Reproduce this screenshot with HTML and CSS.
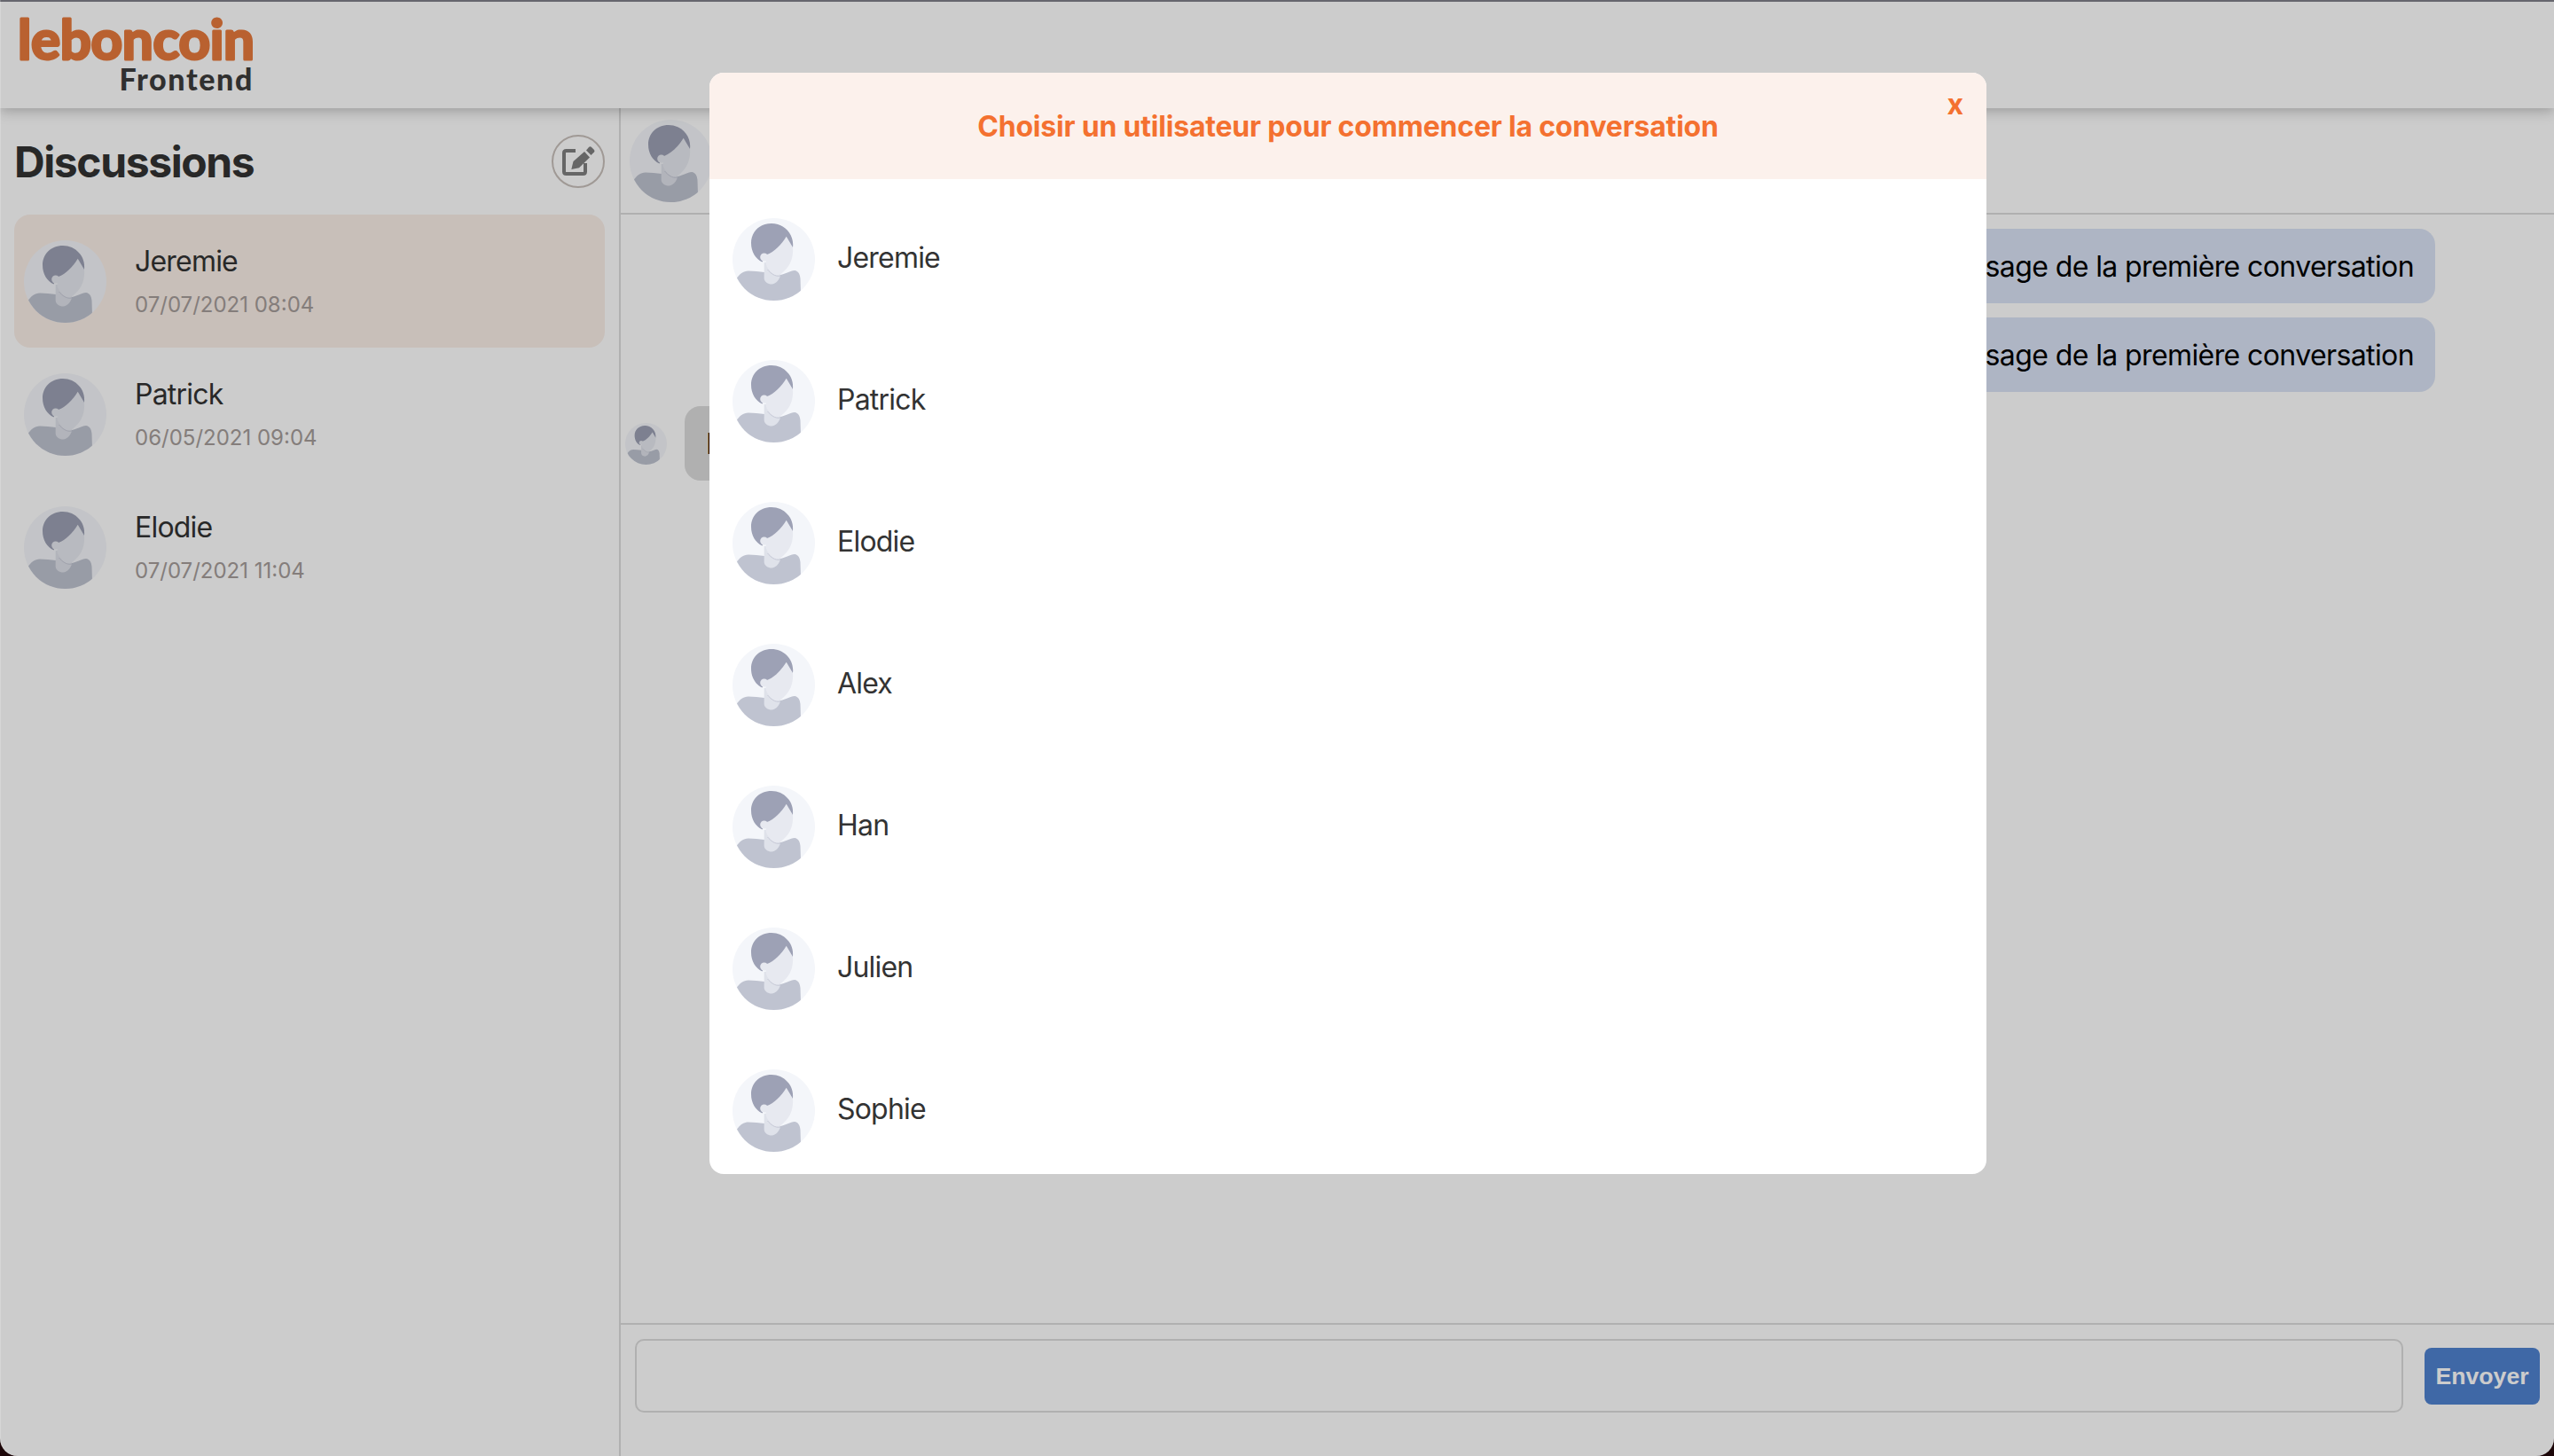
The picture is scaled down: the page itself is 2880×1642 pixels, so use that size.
FILE: index.html
```html
<!DOCTYPE html>
<html lang="fr">
<head>
<meta charset="utf-8">
<title>leboncoin Frontend</title>
<link rel="stylesheet" href="styles.css">
</head>
<body>
<svg class="defs" width="0" height="0" aria-hidden="true">
  <defs>
    <clipPath id="disc"><circle cx="46.5" cy="46.5" r="46.5"/></clipPath>
    <symbol id="avatar" viewBox="0 0 93 93">
      <circle cx="46.5" cy="46.5" r="46.5" fill="#f4f6fa"/>
      <g clip-path="url(#disc)">
        <path d="M4 69C8 63 12 59.5 18 59.5C24 59.5 30 60 36 61L54 64C60 63 65 59.5 70 59C74 59.5 76 63 76.5 68L77 84V100H4Z" fill="#bfc3d0"/>
        <path d="M35.7 50V68C36 72 40 74.5 44 74.5C49 74 53 70 54 64V50Z" fill="#dfe2ea"/>
        <path d="M38 42L60.7 20.7L68 33C69 44 65 54 58 60C54 64 50 65.5 47 64C43 61 38 56 37.5 50Z" fill="#e7e9f0"/>
        <path d="M39.5 58C43 62 48 66.5 54 65" fill="none" stroke="#c6c9d6" stroke-width="1"/>
        <path d="M60.7 20.7L68 33C70 18 58 6 44 6C30 6 21 16 21 28C21 38 26 46 33.5 49.5L36 44L39 41C47 38 55 30 60.7 20.7Z" fill="#9da1b5"/>
        <circle cx="35.7" cy="44" r="4.5" fill="#e7e9f0"/>
      </g>
    </symbol>
  </defs>
</svg>

<div class="app">
  <header class="topbar">
    <div class="logo">
      <svg class="logo-mark" viewBox="0 0 276 52" width="276" height="52">
        <text class="logo-main" x="2" y="47" textLength="267" lengthAdjust="spacing">leboncoin</text>
      </svg>
      <span class="logo-sub">Frontend</span>
    </div>
  </header>
  <main class="main">
    <aside class="sidebar">
      <div class="side-head">
        <h1 class="side-title">Discussions</h1>
        <button class="new-btn" type="button" aria-label="Nouvelle conversation">
          <svg class="new-icon" viewBox="0 0 40 40">
            <path d="M17 8H6.5Q4 8 4 10.5V31.5Q4 34 6.5 34H25.5Q28 34 28 31.5V22" fill="none" stroke="#808080" stroke-width="4"/>
            <path d="M12.3 29L14.5 20L27 9L33 15.5L21 27.3Z" fill="#808080"/>
            <path d="M29 7.5L32 4Q33.5 2.5 35 4L38 7Q39 8.5 38 9.5L34.5 13Z" fill="#808080"/>
          </svg>
        </button>
      </div>
      <ul class="conv-list">
        <li class="conv conv-active">
          <svg class="avatar"><use href="#avatar"/></svg>
          <div class="conv-text"><div class="conv-name">Jeremie</div><div class="conv-date">07/07/2021 08:04</div></div>
        </li>
        <li class="conv">
          <svg class="avatar"><use href="#avatar"/></svg>
          <div class="conv-text"><div class="conv-name">Patrick</div><div class="conv-date">06/05/2021 09:04</div></div>
        </li>
        <li class="conv">
          <svg class="avatar"><use href="#avatar"/></svg>
          <div class="conv-text"><div class="conv-name">Elodie</div><div class="conv-date">07/07/2021 11:04</div></div>
        </li>
      </ul>
    </aside>
    <section class="chat">
      <div class="chat-head"><svg class="avatar"><use href="#avatar"/></svg></div>
      <div class="messages">
        <div class="msg msg-out">Premier message de la première conversation</div>
        <div class="msg msg-out">Deuxième message de la première conversation</div>
        <div class="msg-in-row">
          <svg class="avatar-small"><use href="#avatar"/></svg>
          <div class="msg msg-in">Bonjour, ceci est une réponse</div>
        </div>
      </div>
      <form class="composer">
        <textarea class="composer-input" aria-label="Message"></textarea>
        <button class="send" type="button">Envoyer</button>
      </form>
    </section>
  </main>
</div>

<div class="overlay">
  <div class="modal">
    <div class="modal-head">
      <h2 class="modal-title">Choisir un utilisateur pour commencer la conversation</h2>
      <span class="modal-close">x</span>
    </div>
    <ul class="user-list">
      <li class="user"><svg class="avatar"><use href="#avatar"/></svg><span class="user-name">Jeremie</span></li>
      <li class="user"><svg class="avatar"><use href="#avatar"/></svg><span class="user-name">Patrick</span></li>
      <li class="user"><svg class="avatar"><use href="#avatar"/></svg><span class="user-name">Elodie</span></li>
      <li class="user"><svg class="avatar"><use href="#avatar"/></svg><span class="user-name">Alex</span></li>
      <li class="user"><svg class="avatar"><use href="#avatar"/></svg><span class="user-name">Han</span></li>
      <li class="user"><svg class="avatar"><use href="#avatar"/></svg><span class="user-name">Julien</span></li>
      <li class="user"><svg class="avatar"><use href="#avatar"/></svg><span class="user-name">Sophie</span></li>
    </ul>
  </div>
</div>
</body>
</html>
```

FILE: styles.css
```css
* { box-sizing: border-box; }
html, body { height: 100%; margin: 0; overflow: hidden; background: #1c0608; }
body { font-family: Inter, "Liberation Sans", sans-serif; color: #333; }
ul { list-style: none; margin: 0; padding: 0; }
.defs { display: block; height: 0; }

.app {
  height: 1642px;
  display: flex;
  flex-direction: column;
  background: #fff;
  border-top: 2px solid #808089;
  border-radius: 0 0 20px 20px;
  overflow: hidden;
}

.topbar {
  height: 120px;
  flex: none;
  padding: 18px 0 0 18px;
  background: #fff;
  box-shadow: 0 3px 14px rgba(0,0,0,.25);
  position: relative;
  z-index: 1;
}
.logo { width: 268px; display: flex; flex-direction: column; align-items: flex-end; }
.logo-mark { display: block; flex: none; align-self: flex-start; overflow: visible; }
.logo-main {
  font-family: Lato, sans-serif;
  font-weight: 700;
  font-size: 62px;
  fill: #e87a3c;
  stroke: #e87a3c;
  stroke-width: 3px;
  stroke-linejoin: round;
  stroke-linecap: round;
}
.logo-sub {
  font-family: Lato, sans-serif;
  font-weight: 900;
  font-size: 34px;
  line-height: 30px;
  letter-spacing: 1.6px;
  color: #3d3d3d;
  margin-top: 2px;
}

.main { flex: 1; display: flex; min-height: 0; }

.sidebar { width: 700px; flex: none; border-right: 2px solid #dcdcdc; padding: 0 16px; }
.side-head { height: 120px; display: flex; align-items: center; justify-content: space-between; }
.side-title { margin: 2px 0 0; font-size: 48px; line-height: 60px; font-weight: 700; letter-spacing: -1.4px; color: #333; }
.new-btn {
  width: 60px; height: 60px; padding: 0;
  background: #fff;
  border: 2px solid #c8c0bb;
  border-radius: 50%;
  display: flex; align-items: center; justify-content: center;
}
.new-icon { width: 40px; height: 40px; }

.conv { height: 150px; display: flex; align-items: center; gap: 32px; padding-left: 11px; border-radius: 18px; }
.conv-active { background: #fbefe8; }
.avatar { width: 93px; height: 93px; flex: none; display: block; }
.avatar-small { width: 47px; height: 47px; flex: none; display: block; }
.conv-name { font-size: 32px; line-height: 48px; letter-spacing: -.8px; color: #333; }
.conv-date { font-size: 24px; line-height: 40px; margin-top: 5px; color: #a59d9a; }

.chat { flex: 1; min-width: 0; display: flex; flex-direction: column; }
.chat-head { height: 120px; flex: none; border-bottom: 2px solid #dcdcdc; padding: 13px 0 0 10px; }
.messages { flex: 1; display: flex; flex-direction: column; align-items: flex-end; gap: 16px; padding: 16px 134px 0 5px; min-height: 0; }
.msg { height: 84px; display: flex; align-items: center; padding: 0 24px; font-size: 32px; letter-spacing: -.6px; color: #000; border-radius: 18px; white-space: nowrap; }
.msg-out { background: #dae3f5; }
.msg-in { background: #dcdcdc; }
.msg-in-row { align-self: flex-start; display: flex; align-items: center; gap: 20px; }

.composer { height: 150px; flex: none; border-top: 2px solid #dcdcdc; display: flex; align-items: flex-start; padding: 16px 16px 0 16px; gap: 24px; }
.composer-input { flex: 1; height: 83px; border: 2px solid #dcdcdc; border-radius: 10px; background: #fff; resize: none; }
.send {
  width: 130px; height: 64px; padding: 0; flex: none;
  margin-top: 10px;
  background: #4f82d0; color: #fff;
  border: none; border-radius: 8px;
  font-family: "Liberation Sans", sans-serif; font-weight: 700; font-size: 26.67px;
}

.overlay { position: fixed; inset: 0; background: rgba(0,0,0,.2); z-index: 10; border-radius: 0 0 20px 20px; box-shadow: inset 1px 0 0 rgba(255,255,255,.18); }
.modal {
  position: absolute;
  left: 800px; top: 82px;
  width: 1440px; height: 1242px;
  background: #fff;
  border-radius: 16px;
  overflow: hidden;
  display: flex; flex-direction: column;
}
.modal-head { height: 120px; flex: none; background: #fcf1ec; display: flex; align-items: center; justify-content: center; position: relative; }
.modal-title { margin: 0; font-size: 32px; font-weight: 700; letter-spacing: -.2px; color: #f47130; }
.modal-close { position: absolute; right: 26px; top: 16px; font-size: 32px; line-height: 40px; font-weight: 700; color: #f47130; }
.user-list { flex: 1; min-height: 0; overflow: hidden; padding: 8px 26px 0; }
.user { height: 160px; display: flex; align-items: center; gap: 25px; }
.user .avatar { margin-top: 5px; }
.user-name { font-size: 32px; letter-spacing: -.8px; color: #333; }
```
